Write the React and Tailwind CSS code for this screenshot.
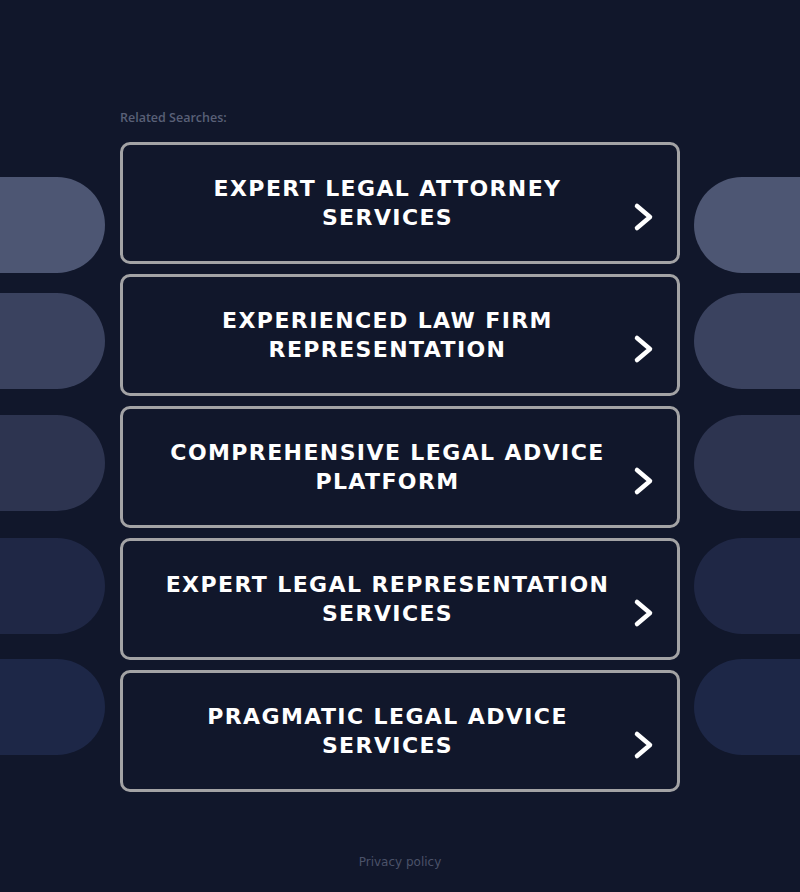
import React from 'react';

const searches = [
    ['EXPERT LEGAL ATTORNEY', 'SERVICES'],
    ['EXPERIENCED LAW FIRM', 'REPRESENTATION'],
    ['COMPREHENSIVE LEGAL ADVICE', 'PLATFORM'],
    ['EXPERT LEGAL REPRESENTATION', 'SERVICES'],
    ['PRAGMATIC LEGAL ADVICE', 'SERVICES'],
];

const pills = [
    { color: 'bg-[#4d5673]', mt: 'mt-0' },
    { color: 'bg-[#3a425f]', mt: 'mt-[20px]' },
    { color: 'bg-[#2d3450]', mt: 'mt-[26px]' },
    { color: 'bg-[#1f2745]', mt: 'mt-[27px]' },
    { color: 'bg-[#1d2747]', mt: 'mt-[25px]' },
];

function Chevron() {
    return (
        <svg width="24" height="30" viewBox="0 0 24 30" className="shrink-0">
            <path d="M5 4 L18 15 L5 26" fill="none" stroke="white" strokeWidth="4.5" strokeLinecap="round" strokeLinejoin="round" />
        </svg>
    );
}

export default function App() {
    return (
        <div className="min-h-[892px] bg-[#11172b] flex flex-col" style={{ fontFamily: '"DejaVu Sans", sans-serif' }}>
            <div className="flex flex-1">
                <div className="w-[120px] shrink-0 pt-[177px] flex flex-col">
                    {pills.map((p, i) => (
                        <div key={i} className={`${p.mt} ${p.color} h-[96px] w-[105px] rounded-r-[48px]`} />
                    ))}
                </div>

                <div className="w-[560px] shrink-0 pt-[110px]">
                    <p className="text-[12.5px] leading-[16px] font-semibold text-[#596077] mb-[16px]" style={{ fontFamily: '"Open Sans", sans-serif' }}>
                        Related Searches:
                    </p>
                    <div className="flex flex-col gap-[10px]">
                        {searches.map((lines, i) => (
                            <a
                                key={i}
                                href="#"
                                className="h-[122px] border-[3px] border-[#a3a3a5] rounded-[10px] flex items-center pl-[20px] pr-[21px]"
                            >
                                <div className="flex-1 flex items-end">
                                    <div className="flex-1 text-center text-white font-bold text-[22px] leading-[29px] tracking-[1.4px]">
                                        {lines.map((l, j) => (
                                            <div key={j}>{l}</div>
                                        ))}
                                    </div>
                                    <Chevron />
                                </div>
                            </a>
                        ))}
                    </div>
                </div>

                <div className="flex-1 pt-[177px] pl-[14px] flex flex-col">
                    {pills.map((p, i) => (
                        <div key={i} className={`${p.mt} ${p.color} h-[96px] w-full rounded-l-[48px]`} />
                    ))}
                </div>
            </div>

            <footer className="pb-[19px] text-center">
                <a href="#" className="text-[12px] leading-[16px] text-[#4b5269]">Privacy policy</a>
            </footer>
        </div>
    );
}
